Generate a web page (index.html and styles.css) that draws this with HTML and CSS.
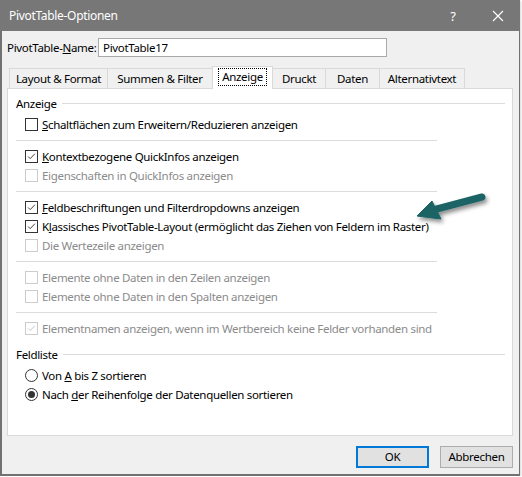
FILE: index.html
```html
<!DOCTYPE html>
<html lang="de">
<head>
<meta charset="utf-8">
<title>PivotTable-Optionen</title>
<link rel="stylesheet" href="styles.css">
</head>
<body>
<div class="window">
  <div class="titlebar">
    <span class="title">PivotTable-Optionen</span>
    <span class="help">?</span>
    <svg class="close" width="12" height="12" viewBox="0 0 12 12"><path d="M1 1 L11 11 M11 1 L1 11" stroke="#fff" stroke-width="1.2" fill="none"/></svg>
  </div>
  <div class="body">
    <div class="namerow">
      <span class="namelabel">PivotTable-<u>N</u>ame:</span>
      <div class="input">PivotTable17</div>
    </div>
    <div class="tabs">
      <div class="tab t1">Layout &amp; Format</div>
      <div class="tab t2">Summen &amp; Filter</div>
      <div class="tab active t3"><span class="focus">Anzeige</span></div>
      <div class="tab t4">Druckt</div>
      <div class="tab t5">Daten</div>
      <div class="tab t6">Alternativtext</div>
    </div>
    <div class="panel">
      <div class="group"><span>Anzeige</span><i class="gline"></i></div>
      <div class="row first"><span class="cb"></span><span><u>S</u>chaltflächen zum Erweitern/Reduzieren anzeigen</span></div>
      <div class="sep"></div>
      <div class="row"><span class="cb checked"><svg viewBox="0 0 13 13"><path d="M2.5 6.5 L5 9 L10.5 3.2" stroke="#333" stroke-width="1.1" fill="none"/></svg></span><span><u>K</u>ontextbezogene QuickInfos anzeigen</span></div>
      <div class="row disabled"><span class="cb"></span><span>Eigenschaften in QuickInfos anzeigen</span></div>
      <div class="sep"></div>
      <div class="row"><span class="cb checked"><svg viewBox="0 0 13 13"><path d="M2.5 6.5 L5 9 L10.5 3.2" stroke="#333" stroke-width="1.1" fill="none"/></svg></span><span><u>F</u>eldbeschriftungen und Filterdropdowns anzeigen</span></div>
      <div class="row"><span class="cb checked"><svg viewBox="0 0 13 13"><path d="M2.5 6.5 L5 9 L10.5 3.2" stroke="#333" stroke-width="1.1" fill="none"/></svg></span><span>K<u>l</u>assisches PivotTable-Layout (ermöglicht das Ziehen von Feldern im Raster)</span></div>
      <div class="row disabled"><span class="cb"></span><span>Die Wertezeile anzeigen</span></div>
      <div class="sep"></div>
      <div class="row disabled"><span class="cb"></span><span>Elemente ohne Daten in den Zeilen anzeigen</span></div>
      <div class="row disabled"><span class="cb"></span><span>Elemente ohne Daten in den Spalten anzeigen</span></div>
      <div class="sep"></div>
      <div class="row disabled"><span class="cb checked"><svg viewBox="0 0 13 13"><path d="M2.5 6.5 L5 9 L10.5 3.2" stroke="#c4c4c4" stroke-width="1.1" fill="none"/></svg></span><span>Elementnamen anzeigen, wenn im Wertbereich keine Felder vorhanden sind</span></div>
      <div class="group group2"><span>Feldliste</span><i class="gline"></i></div>
      <div class="row radio-first"><span class="rb"></span><span>Von <u>A</u> bis Z sortieren</span></div>
      <div class="row"><span class="rb on"></span><span>Nach <u>d</u>er Reihenfolge der Datenquellen sortieren</span></div>
    </div>
    <div class="buttons">
      <div class="btn default">OK</div>
      <div class="btn">Abbrechen</div>
    </div>
  </div>
  <svg class="arrow" width="522" height="477" viewBox="0 0 522 477">
    <defs>
      <filter id="sh" x="-20%" y="-50%" width="140%" height="200%">
        <feDropShadow dx="2" dy="3" stdDeviation="2" flood-color="#000" flood-opacity="0.45"/>
      </filter>
    </defs>
    <g filter="url(#sh)" fill="#1b6466" stroke="#1b6466">
      <path d="M482 197 L433 210" stroke-width="7" stroke-linecap="round" fill="none"/>
      <path d="M417 216 L432 201 L441 219 Z" stroke-width="1" stroke-linejoin="round"/>
    </g>
  </svg>
</div>
</body>
</html>
```
FILE: styles.css
```css
* { box-sizing: border-box; }
html, body { margin: 0; padding: 0; background: #fff; }
body {
  font-family: "Noto Sans", "Open Sans", sans-serif;
  font-size: 11.5px;
  letter-spacing: -0.32px;
  color: #000;
}
u { text-decoration: underline; text-underline-offset: 1px; }

.window {
  position: relative;
  width: 520px;
  height: 476px;
  background: #f0f0f0;
  border-left: 2px solid #727272;
  border-right: 1px solid #727272;
  border-bottom: 2px solid #727272;
  box-shadow: 1px 1px 2px rgba(0,0,0,0.15);
}

.titlebar {
  height: 31px;
  margin-left: -2px;
  margin-right: -1px;
  background: #777777;
  color: #fff;
  display: flex;
  align-items: center;
  padding-left: 9px;
  font-size: 12px;
}
.title { flex: 1; }
.help { width: 12px; margin-right: 33px; font-size: 13px; text-align: center; }
.close { margin-right: 16px; }

.body { padding: 0 4px 0 5px; }

.namerow {
  display: flex;
  align-items: center;
  margin-top: 7px;
  height: 19px;
}
.namelabel { width: 91px; flex: none; white-space: nowrap; }
.input {
  width: 289px;
  height: 19px;
  background: #fff;
  border: 1px solid #a9a9a9;
  padding-left: 4px;
  line-height: 17px;
}

.tabs {
  display: flex;
  align-items: flex-end;
  height: 22px;
  margin-top: 9px;
  padding-left: 2px;
  position: relative;
  z-index: 2;
}
.tab {
  height: 20px;
  border: 1px solid #d9d9d9;
  border-bottom: none;
  border-right: none;
  text-align: center;
  line-height: 19px;
  background: #f0f0f0;
  white-space: nowrap;
}
.tab.t6 { border-right: 1px solid #d9d9d9; }
.t1 { width: 98px; }
.t2 { width: 105px; }
.t3 { width: 61px; }
.t4 { width: 52px; }
.t5 { width: 54px; }
.t6 { width: 86px; }
.tab.active {
  height: 23px;
  margin-bottom: -1px;
  background: #fff;
  border-right: 1px solid #d9d9d9;
  padding-top: 1px;
  line-height: 18px;
}
.tab.active + .tab { border-left: none; }
.focus {
  display: inline-block;
  border: 1px dotted #000;
  padding: 0 3px;
  line-height: 16px;
}

.panel {
  width: 506px;
  height: 348px;
  background: #fff;
  border: 1px solid #d9d9d9;
  padding-left: 8px;
  position: relative;
  z-index: 1;
}

.group {
  display: flex;
  align-items: center;
  height: 19px;
  margin-top: 5px;
}
.gline {
  display: block;
  height: 1px;
  background: #dcdcdc;
  margin-left: 5px;
  flex-grow: 1;
  margin-right: 7px;
}
.group2 { margin-top: 7px; }

.row {
  display: flex;
  align-items: center;
  height: 19px;
  padding-left: 9px;
  white-space: nowrap;
}
.row.first { margin-top: 2px; }
.row.radio-first { margin-top: 2px; }
.row.disabled { color: #8b8b8b; }

.cb {
  width: 13px;
  height: 13px;
  border: 1px solid #333;
  background: #fff;
  margin-right: 4px;
  display: flex;
  flex: none;
}
.cb svg { width: 11px; height: 11px; }
.row.disabled .cb { border-color: #cccccc; }

.rb {
  width: 13px;
  height: 13px;
  border: 1px solid #333;
  border-radius: 50%;
  margin-right: 4px;
  flex: none;
  display: flex;
  align-items: center;
  justify-content: center;
}
.rb.on::after {
  content: "";
  width: 7px;
  height: 7px;
  border-radius: 50%;
  background: #333;
}

.sep {
  width: 421px;
  height: 1px;
  background: #dcdcdc;
  margin: 6px 0;
}

.buttons {
  display: flex;
  justify-content: flex-end;
  gap: 11px;
  margin-top: 10px;
  width: 506px;
}
.btn {
  width: 73px;
  height: 22px;
  background: #e1e1e1;
  border: 1px solid #adadad;
  text-align: center;
  line-height: 20px;
}
.btn.default {
  border: 2px solid #0078d7;
  line-height: 18px;
}

.arrow {
  position: absolute;
  left: -2px;
  top: 0;
  z-index: 5;
  pointer-events: none;
}
```
